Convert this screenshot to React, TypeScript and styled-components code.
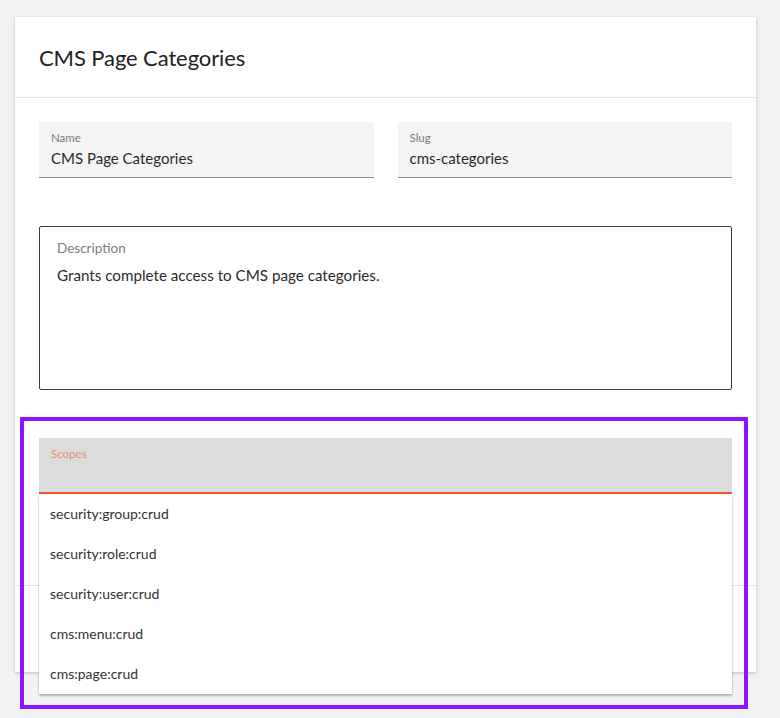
import React from "react";
import styled, { createGlobalStyle } from "styled-components";

const Global = createGlobalStyle`
  html, body { margin: 0; padding: 0; background: #f2f2f2; }
  body { font-family: "Lato", "Noto Sans", sans-serif; color: #333; }
  * { box-sizing: border-box; }
`;

const Page = styled.div`
  padding: 17px 24px 0 15px;
  min-height: 718px;
`;

const Card = styled.div`
  position: relative;
  background: #fff;
  box-shadow: 0 1px 3px rgba(0, 0, 0, 0.22);
  height: 655px;
`;

const Header = styled.div`
  height: 81px;
  display: flex;
  align-items: center;
  padding: 0 24px;
  border-bottom: 1px solid #e3e3e3;
`;

const Title = styled.h1`
  margin: 0;
  font-size: 22px;
  font-weight: 400;
  color: #222;
  letter-spacing: -0.1px;
`;

const Body = styled.div`
  padding: 24px 24px 91px;
  display: flex;
  flex-direction: column;
  gap: 48px;
`;

const Row = styled.div`
  display: grid;
  grid-template-columns: 1fr 1fr;
  gap: 24px;
`;

const Filled = styled.div<{ $active?: boolean }>`
  position: relative;
  height: 56px;
  padding: 9px 12px 0;
  background: ${(p) => (p.$active ? "#dcdcdc" : "#f4f4f4")};
  border-bottom: ${(p) => (p.$active ? "2px solid #f5572b" : "1px solid #8c8c8c")};
`;

const SmallLabel = styled.div<{ $active?: boolean }>`
  font-size: 11.5px;
  line-height: 14px;
  color: ${(p) => (p.$active ? "#ea8a72" : "#7a7a7a")};
`;

const Value = styled.div`
  margin-top: 3px;
  font-size: 15px;
  line-height: 20px;
  color: #2b2b2b;
`;

const Outlined = styled.div`
  height: 164px;
  border: 1px solid #3d3d3d;
  border-radius: 2px;
  padding: 12px 17px;
`;

const OutlinedLabel = styled.div`
  font-size: 13.5px;
  line-height: 18px;
  color: #7d7d7d;
`;

const OutlinedText = styled.div`
  margin-top: 8px;
  font-size: 15.2px;
  line-height: 20px;
  color: #2b2b2b;
`;

const Footer = styled.div`
  border-top: 1px solid #e3e3e3;
  height: 87px;
`;

const Menu = styled.ul`
  position: absolute;
  top: calc(100% + 2px);
  left: 0;
  right: 0;
  margin: 0;
  padding: 0;
  list-style: none;
  background: #fff;
  box-shadow: 0 2px 2px rgba(0, 0, 0, 0.25), 0 0 2px rgba(0, 0, 0, 0.12);
  z-index: 2;
`;

const MenuItem = styled.li`
  height: 40px;
  display: flex;
  align-items: center;
  padding-left: 11px;
  padding-bottom: 1px;
  font-size: 14px;
  color: #333;
`;

const Highlight = styled.div`
  position: absolute;
  left: 5px;
  top: 400px;
  width: 728px;
  height: 292px;
  border: 4px solid #9013fe;
  pointer-events: none;
  z-index: 3;
`;

const scopes = [
  "security:group:crud",
  "security:role:crud",
  "security:user:crud",
  "cms:menu:crud",
  "cms:page:crud",
];

export default function App() {
  return (
    <>
      <Global />
      <Page>
        <Card>
          <Header>
            <Title>CMS Page Categories</Title>
          </Header>
          <Body>
            <Row>
              <Filled>
                <SmallLabel>Name</SmallLabel>
                <Value>CMS Page Categories</Value>
              </Filled>
              <Filled>
                <SmallLabel>Slug</SmallLabel>
                <Value>cms-categories</Value>
              </Filled>
            </Row>
            <Outlined>
              <OutlinedLabel>Description</OutlinedLabel>
              <OutlinedText>Grants complete access to CMS page categories.</OutlinedText>
            </Outlined>
            <Filled $active>
              <SmallLabel $active>Scopes</SmallLabel>
              <Menu>
                {scopes.map((s) => (
                  <MenuItem key={s}>{s}</MenuItem>
                ))}
              </Menu>
            </Filled>
          </Body>
          <Footer />
          <Highlight />
        </Card>
      </Page>
    </>
  );
}
